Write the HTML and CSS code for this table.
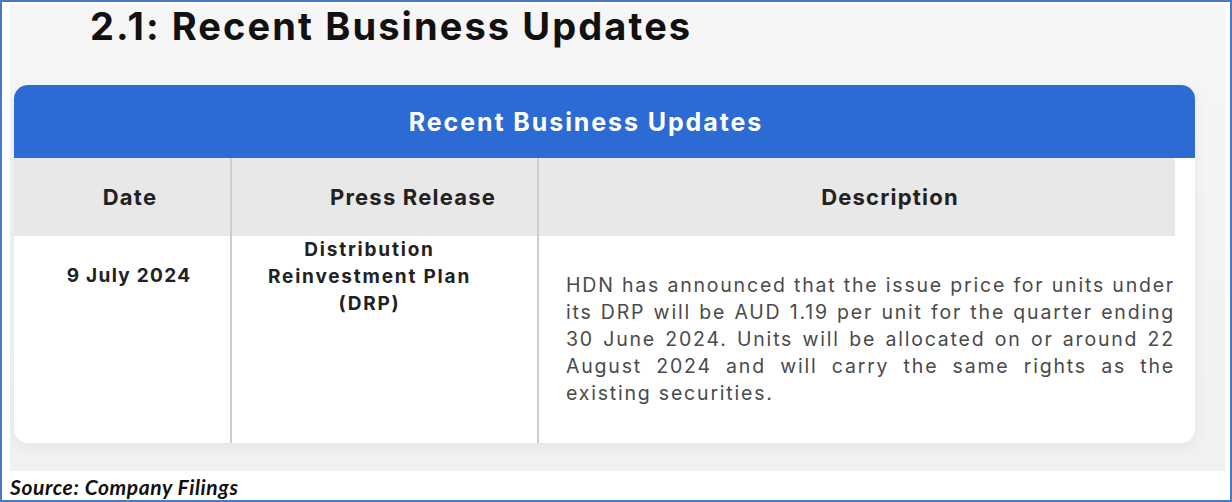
FILE: index.html
```html
<!DOCTYPE html>
<html>
<head>
<meta charset="utf-8">
<link rel="stylesheet" href="styles.css">
</head>
<body>
<div class="frame">
  <div class="shot">
    <h1 class="title">2.1: Recent Business Updates</h1>
    <div class="card">
      <div class="card-head">Recent Business Updates</div>
      <div class="grid">
        <div class="th th-date">Date</div>
        <div class="th th-press">Press Release</div>
        <div class="th th-desc">Description</div>
        <div class="td td-date">9 July 2024</div>
        <div class="td td-press">Distribution<br>Reinvestment Plan<br>(DRP)</div>
        <div class="td td-desc"><p>HDN has announced that the issue price for units under its DRP will be AUD 1.19 per unit for the quarter ending 30 June 2024. Units will be allocated on or around 22 August 2024 and will carry the same rights as the existing securities.</p></div>
      </div>
    </div>
  </div>
  <div class="source">Source: Company Filings</div>
</div>
</body>
</html>
```
FILE: styles.css
```css
* { box-sizing: border-box; }
html, body { margin: 0; padding: 0; background: #ffffff; }
.frame {
  width: 1232px;
  height: 502px;
  border: 2px solid #4a78c9;
  display: flex;
  flex-direction: column;
}
.shot {
  margin: 2px 5px 0 8px;
  height: 467px;
  background: linear-gradient(#f6f6f6, #f1f1f1);
  display: flex;
  flex-direction: column;
}
.title {
  margin: 0;
  padding-left: 80px;
  padding-top: 0;
  height: 81px;
  font-family: Inter, "Open Sans", sans-serif;
  font-weight: 700;
  font-size: 38px;
  line-height: 44px;
  letter-spacing: 2.1px;
  color: #111;
}
.card {
  margin-left: 4px;
  width: 1181px;
  height: 358px;
  background: #ffffff;
  border-radius: 14px;
  overflow: hidden;
  box-shadow: 0 4px 14px rgba(0,0,0,0.06);
  display: flex;
  flex-direction: column;
}
.card-head {
  height: 73px;
  background: #2c6bd3;
  color: #ffffff;
  font-family: Inter, "Open Sans", sans-serif;
  font-weight: 700;
  font-size: 25px;
  letter-spacing: 1.9px;
  display: flex;
  align-items: center;
  justify-content: center;
  padding-right: 37px;
}
.grid {
  flex: 1;
  display: grid;
  grid-template-columns: 216px 307px 1fr;
  grid-template-rows: 78px 1fr;
  font-family: Inter, "Open Sans", sans-serif;
  color: #222;
}
.th {
  background: #e8e8e8;
  font-weight: 700;
  font-size: 22px;
  letter-spacing: 1.2px;
  display: flex;
  align-items: center;
  justify-content: center;
}
.th-date { padding-left: 16px; }
.th-press, .td-press { border-left: 2px solid #cdcdcd; }
.th-desc, .td-desc { border-left: 2px solid #cdcdcd; }
.th-press { padding-left: 57px; }
.th-desc { margin-right: 20px; padding-left: 66px; }
.td {
  font-weight: 700;
  font-size: 19px;
  line-height: 27px;
  text-align: center;
}
.td-date { padding-top: 26px; padding-left: 14px; letter-spacing: 1.3px; }
.td-press { padding-top: 0; padding-right: 30px; letter-spacing: 1.8px; }
.td-desc {
  display: flex;
  align-items: center;
  padding: 0 20px 0 27px;
}
.td-desc p {
  margin: 0;
  font-weight: 400;
  font-size: 19.5px;
  line-height: 27px;
  letter-spacing: 1.8px;
  text-align: justify;
  color: #4a4a4a;
}
.source {
  padding-left: 8px;
  padding-top: 3px;
  font-family: Lato, "Liberation Sans", sans-serif;
  font-weight: 700;
  font-style: italic;
  font-size: 21px;
  letter-spacing: 0.6px;
  color: #111;
}
```
